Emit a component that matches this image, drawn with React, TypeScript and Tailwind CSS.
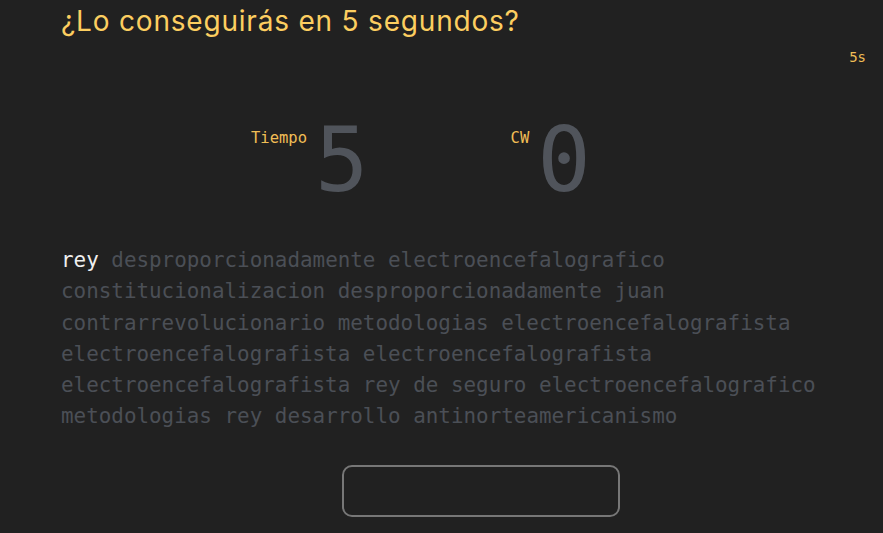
const lines: string[][] = [
  ["rey", "desproporcionadamente", "electroencefalografico"],
  ["constitucionalizacion", "desproporcionadamente", "juan"],
  ["contrarrevolucionario", "metodologias", "electroencefalografista"],
  ["electroencefalografista", "electroencefalografista"],
  ["electroencefalografista", "rey", "de", "seguro", "electroencefalografico"],
  ["metodologias", "rey", "desarrollo", "antinorteamericanismo"],
];

const mono = "font-['DejaVu_Sans_Mono',monospace]";

const Stat = ({ label, value }: { label: string; value: string }) => (
  <div className="flex items-start">
    <span className={`${mono} mt-[16px] text-[15.5px] leading-[24px] text-[#f0bd55]`}>{label}</span>
    <span className={`${mono} ml-[8px] text-[89px] leading-[100px] text-[#50545b]`}>{value}</span>
  </div>
);

const App = () => {
  return (
    <div className="relative h-[533px] w-[883px] overflow-hidden bg-[#212121]">
      {/* Header */}
      <h1 className="px-[61px] pt-[3px] font-['Inter',sans-serif] text-[28px] leading-[36px] tracking-[0.8px] text-[#fcce60]">
        ¿Lo conseguirás en 5 segundos?
      </h1>
      <div className={`${mono} absolute right-[17px] top-[47px] text-[14px] leading-[20px] text-[#f0bd55]`}>5s</div>

      {/* Stats */}
      <div className="mt-[71px] flex pl-[251px]">
        <Stat label="Tiempo" value="5" />
        <div className="ml-[142px]">
          <Stat label="CW" value="0" />
        </div>
      </div>

      {/* Words */}
      <div className={`${mono} mt-[35px] px-[61px] text-[20.9px] leading-[31.3px] text-[#4b4f56]`}>
        {lines.map((line, i) => (
          <div key={i} className="whitespace-pre">
            {line.map((w, j) => (
              <span key={j} className={i === 0 && j === 0 ? "text-[#f0f0f0]" : ""}>
                {j > 0 ? " " : ""}
                {w}
              </span>
            ))}
          </div>
        ))}
      </div>

      {/* Input */}
      <div className="mt-[32px] flex pl-[342px]">
        <div className="h-[52px] w-[278px] rounded-[10px] border-2 border-[#777777]" />
      </div>
    </div>
  );
};

export default App;
